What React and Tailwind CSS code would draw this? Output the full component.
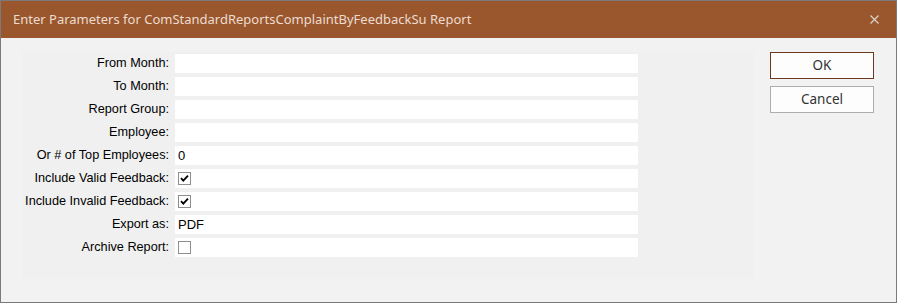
const ROWS = [
  { label: 'From Month:' },
  { label: 'To Month:' },
  { label: 'Report Group:' },
  { label: 'Employee:' },
  { label: 'Or # of Top Employees:', value: '0' },
  { label: 'Include Valid Feedback:', check: true },
  { label: 'Include Invalid Feedback:', check: true },
  { label: 'Export as:', value: 'PDF' },
  { label: 'Archive Report:', check: false },
];

function CheckBox({ checked }) {
  return (
    <span className="w-[13px] h-[13px] border border-[#8f8f8f] bg-white flex items-center justify-center">
      {checked && (
        <svg width="9" height="9" viewBox="0 0 9 9">
          <path d="M1 4.2 L3.3 6.6 L8 1.6" fill="none" stroke="#000" strokeWidth="1.8" />
        </svg>
      )}
    </span>
  );
}

export default function App() {
  return (
    <div className="w-[897px] h-[303px] border border-[#7a7a7a] bg-[#f2f2f2] flex flex-col overflow-hidden">
      {/* Title bar */}
      <div className="h-[37px] bg-[#9a572e] flex items-center justify-between pl-[12px] pr-[17px] shrink-0">
        <span className="text-[13px] text-[#ecdcd0] font-['Noto_Sans',sans-serif]">
          Enter Parameters for ComStandardReportsComplaintByFeedbackSu Report
        </span>
        <svg width="9" height="9" viewBox="0 0 9 9">
          <path d="M0.5 0.5 L8.5 8.5 M8.5 0.5 L0.5 8.5" stroke="#dcd2ca" strokeWidth="1.2" />
        </svg>
      </div>

      {/* Body */}
      <div className="flex pl-[21px] pt-[14px]">
        <div className="w-[732px] h-[227px] bg-[#f0f0f0] flex flex-col gap-[4px] pt-[2px] font-['Liberation_Sans',Arial,sans-serif] text-[12.7px] text-black">
          {ROWS.map(r => (
            <div key={r.label} className="flex items-center h-[19px]">
              <div className="w-[148px] text-right pr-[1px] whitespace-nowrap">{r.label}</div>
              <div className="ml-[5px] w-[463px] h-[19px] bg-white flex items-center pl-[3px]">
                {r.value && <span className="text-[13px]">{r.value}</span>}
                {r.check !== undefined && <CheckBox checked={r.check} />}
              </div>
            </div>
          ))}
        </div>

        <div className="ml-[16px] flex flex-col gap-[7px] font-['Noto_Sans',sans-serif] text-[13.5px] text-[#333]">
          <button className="w-[104px] h-[27px] bg-[#fdfdfd] border border-[#6b3a1e] flex items-center justify-center">
            OK
          </button>
          <button className="w-[104px] h-[27px] bg-[#fdfdfd] border border-[#adadad] flex items-center justify-center">
            Cancel
          </button>
        </div>
      </div>
    </div>
  );
}
